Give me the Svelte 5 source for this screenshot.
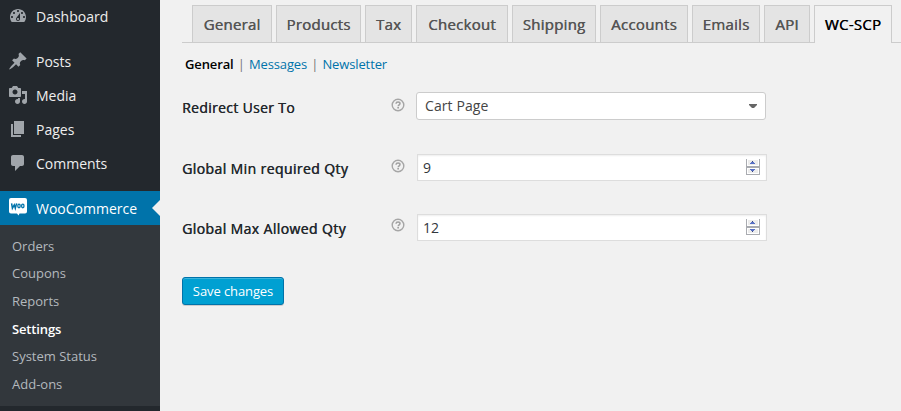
<script>
  const menu = [
    { label: 'Dashboard', path: 'M3.76 16h12.48c1.1-1.37 1.76-3.11 1.76-5 0-4.42-3.58-8-8-8s-8 3.58-8 8c0 1.89.66 3.63 1.76 5zM10 4c.55 0 1 .45 1 1s-.45 1-1 1-1-.45-1-1 .45-1 1-1zM6 6c.55 0 1 .45 1 1s-.45 1-1 1-1-.45-1-1 .45-1 1-1zm8 0c.55 0 1 .45 1 1s-.45 1-1 1-1-.45-1-1 .45-1 1-1zm-5.37 5.55L12 7v6c0 1.1-.9 2-2 2s-2-.9-2-2c0-.57.24-1.08.63-1.45zM4 10c.55 0 1 .45 1 1s-.45 1-1 1-1-.45-1-1 .45-1 1-1zm12 0c.55 0 1 .45 1 1s-.45 1-1 1-1-.45-1-1 .45-1 1-1zm-5 3c0-.55-.45-1-1-1s-1 .45-1 1 .45 1 1 1 1-.45 1-1z', gap: true },
    { label: 'Posts', path: 'M10.44 3.02l1.82-1.82 6.36 6.35-1.83 1.82c-1.05-.68-2.48-.57-3.41.36l-.75.75c-.92.93-1.04 2.35-.35 3.41l-1.83 1.82-2.41-2.41-2.8 2.79c-.42.42-3.38 2.71-3.8 2.29s1.86-3.39 2.28-3.81l2.79-2.79L4.1 9.36l1.83-1.82c1.05.69 2.48.57 3.4-.36l.75-.75c.93-.92 1.05-2.35.36-3.41z' },
    { label: 'Media', path: 'M13 11V4c0-.55-.45-1-1-1h-1.67L9 1H5L3.67 3H2c-.55 0-1 .45-1 1v7c0 .55.45 1 1 1h10c.55 0 1-.45 1-1zM7 4.5c1.38 0 2.5 1.12 2.5 2.5S8.38 9.5 7 9.5 4.5 8.38 4.5 7 5.62 4.5 7 4.5zM14 6h5v10.5c0 1.38-1.12 2.5-2.5 2.5S14 17.88 14 16.5s1.12-2.5 2.5-2.5c.17 0 .34.02.5.05V9h-3V6zm-4 8.05V13h2v3.5c0 1.38-1.12 2.5-2.5 2.5S7 17.88 7 16.5 8.12 14 9.5 14c.17 0 .34.02.5.05z' },
    { label: 'Pages', path: 'M6 15V2h10v13H6zm-1 1h8v2H3V5h2v11z' },
    { label: 'Comments', path: 'M5 2h9c1.1 0 2 .9 2 2v7c0 1.1-.9 2-2 2h-2l-5 5v-5H5c-1.1 0-2-.9-2-2V4c0-1.1.9-2 2-2z' }
  ];
  const submenu = ['Orders', 'Coupons', 'Reports', 'Settings', 'System Status', 'Add-ons'];
  const tabs = [
    ['General', 80], ['Products', 85], ['Tax', 47], ['Checkout', 92], ['Shipping', 84],
    ['Accounts', 88], ['Emails', 68], ['API', 46], ['WC-SCP', 78]
  ];
</script>

{#snippet help()}
  <svg class="help" width="14" height="14" viewBox="0 0 14 14">
    <circle cx="7" cy="7" r="5.8" fill="none" stroke="#a6a6a6" stroke-width="1.4" />
    <path d="M5 5.7C5.1 4.4 5.9 3.9 7 3.9s2 .6 2 1.6C9 6.8 7.2 6.8 7.2 8.2" fill="none" stroke="#a0a0a0" stroke-width="1.5" />
    <rect x="6.3" y="9" width="1.7" height="1.5" fill="#a0a0a0" />
  </svg>
{/snippet}

{#snippet number(value)}
  <div class="number">
    <span>{value}</span>
    <svg width="14" height="16" viewBox="0 0 14 16" shape-rendering="crispEdges">
      <rect width="14" height="16" fill="#a9abb0" />
      <rect x="1" y="0" width="12" height="7" fill="#fff" />
      <rect x="2" y="1" width="10" height="5" fill="#ececec" />
      <rect x="1" y="9" width="12" height="6" fill="#fff" />
      <rect x="2" y="10" width="10" height="4" fill="#ececec" />
      <path d="M6 2h1v1h1v1h1v1H4V4h1V3h1z" fill="#5870c4" />
      <path d="M6 2h1v1H6z" fill="#39477d" />
      <path d="M4 10h5v1H8v1H7v1H6v-1H5v-1H4z" fill="#5870c4" />
      <path d="M6 12h1v1H6z" fill="#39477d" />
    </svg>
  </div>
{/snippet}

<div class="page">
  <nav class="side">
    {#each menu as item}
      <div class="item" class:gap={item.gap}>
        <svg width="20" height="20" viewBox="0 0 20 20"><path d={item.path} fill="#a0a5aa" fill-rule="evenodd" /></svg>
        <span>{item.label}</span>
      </div>
    {/each}
    <div class="item current">
      <svg width="20" height="20" viewBox="0 0 20 20">
        <path d="M3 1h14q2 0 2 2v11.5q0 2-2 2h-5.5L10.5 18.5 9 16.5H3q-2 0-2-2V3q0-2 2-2z" fill="#fff" />
        <path d="M3.6 6.4l.8 4.8 1.9-3.3 1 3.3 1.3-4.8" fill="none" stroke="#0073aa" stroke-width="1.5" />
        <ellipse cx="11" cy="9" rx="1.2" ry="1.8" fill="none" stroke="#0073aa" stroke-width="1.3" />
        <ellipse cx="14.8" cy="9" rx="1.2" ry="1.8" fill="none" stroke="#0073aa" stroke-width="1.3" />
      </svg>
      <span>WooCommerce</span>
      <i class="arrow"></i>
    </div>
    <div class="sub">
      {#each submenu as label}
        <div class="subitem" class:on={label === 'Settings'}>{label}</div>
      {/each}
    </div>
  </nav>

  <main>
    <div class="tabs">
      {#each tabs as [label, width]}
        <div class="tab" class:active={label === 'WC-SCP'} style="width: {width}px">{label}</div>
      {/each}
    </div>
    <div class="links">
      <b>General</b><i>|</i><span>Messages</span><i>|</i><span>Newsletter</span>
    </div>
    <div class="row first">
      <span class="label">Redirect User To</span>
      {@render help()}
      <div class="select">
        <span>Cart Page</span>
        <svg width="8" height="4" viewBox="0 0 8 4"><path d="M0 0h8v1L5 4H3L0 1z" fill="#666" /></svg>
      </div>
    </div>
    <div class="row second">
      <span class="label">Global Min required Qty</span>
      {@render help()}
      {@render number('9')}
    </div>
    <div class="row third">
      <span class="label">Global Max Allowed Qty</span>
      {@render help()}
      {@render number('12')}
    </div>
    <button>Save changes</button>
  </main>
</div>

<style>
  :global(body) { background: #f1f1f1; }
  .page {
    display: flex;
    width: 901px;
    height: 411px;
    overflow: hidden;
    font-family: "Open Sans", sans-serif;
    font-size: 14px;
    white-space: nowrap;
  }
  .side { width: 160px; flex: none; background: #23282d; color: #eee; }
  .item { display: flex; height: 34px; padding-left: 8px; gap: 8px; line-height: 34px; box-sizing: border-box; }
  .item svg { margin-top: 6px; flex: none; }
  .item.gap { margin-bottom: 11px; }
  .current { position: relative; margin-top: 10px; background: #0073aa; color: #fff; line-height: 36px; }
  .arrow {
    position: absolute;
    right: 0;
    top: 9px;
    border: 8px solid transparent;
    border-left: 0;
    border-right-color: #f1f1f1;
  }
  .sub { height: 181px; padding: 7.8px 12px 0; box-sizing: border-box; background: #32373c; color: #b4b9be; font-size: 13px; }
  .subitem { height: 27.6px; line-height: 27.6px; }
  .subitem.on { color: #fff; font-weight: 600; letter-spacing: -0.15px; }
  main { display: flex; flex-direction: column; flex: 1; padding: 5px 0 0 22px; color: #23282d; min-width: 0; }
  .tabs { display: flex; gap: 4px; height: 38px; padding-left: 10px; box-sizing: border-box; border-bottom: 1px solid #ccc; }
  .tab {
    box-sizing: border-box;
    flex: none;
    height: 37px;
    border: 1px solid #ccc;
    border-bottom: 0;
    background: #e4e4e4;
    color: #555;
    font-size: 15px;
    font-weight: 500;
    text-shadow: 0.4px 0 0 currentColor;
    letter-spacing: 0.25px;
    line-height: 37px;
    text-align: center;
  }
  .tab.active { height: 38px; background: #f1f1f1; color: #000; }
  .links { display: flex; height: 20px; margin-top: 11px; padding-left: 3px; font-size: 13px; line-height: 20px; letter-spacing: -0.12px; color: #0073aa; }
  .links b { color: #000; font-weight: 600; }
  .links i { width: 15.3px; text-align: center; font-style: normal; color: #777; }
  .row { display: flex; align-items: flex-start; }
  .row .label { width: 209px; font-weight: 500; text-shadow: 0.4px 0 0 currentColor; letter-spacing: 0.4px; line-height: 20px; }
  .row.first .label { letter-spacing: 0.32px; }
  .help { margin-right: 11px; flex: none; }
  .first { height: 28px; margin-top: 18px; }
  .first .label { margin-top: 6px; }
  .first .help { margin-top: 6px; }
  .select {
    display: flex;
    align-items: center;
    justify-content: space-between;
    box-sizing: border-box;
    width: 350px;
    height: 28px;
    padding: 0 8px;
    border: 1px solid #ccc;
    border-radius: 3px;
    background: #fff;
    color: #444;
  }
  .select span { margin-bottom: 2px; letter-spacing: 0.1px; }
  .number {
    display: flex;
    align-items: center;
    justify-content: space-between;
    box-sizing: border-box;
    width: 350px;
    height: 27px;
    margin-left: 1px;
    padding: 0 6px 0 5px;
    border: 1px solid #ddd;
    background: #fff;
    box-shadow: inset 0 1px 2px rgba(0, 0, 0, 0.07);
    color: #32373c;
  }
  .number svg { margin-top: -2px; }
  .second { height: 27px; margin-top: 34px; }
  .third { height: 27px; margin-top: 33px; }
  .second .label, .third .label { margin-top: 5px; }
  .second .help { margin-top: 5px; }
  .third .help { margin-top: 4px; }
  button {
    width: 102px;
    height: 28px;
    margin-top: 36px;
    padding: 0;
    border: 1px solid #0073aa;
    border-radius: 3px;
    background: #00a0d2;
    box-shadow: inset 0 1px 0 rgba(120, 200, 230, 0.5), 0 1px 0 rgba(0, 0, 0, 0.15);
    color: #fff;
    font: 13px/26px "Open Sans", sans-serif;
    letter-spacing: -0.1px;
  }
</style>
